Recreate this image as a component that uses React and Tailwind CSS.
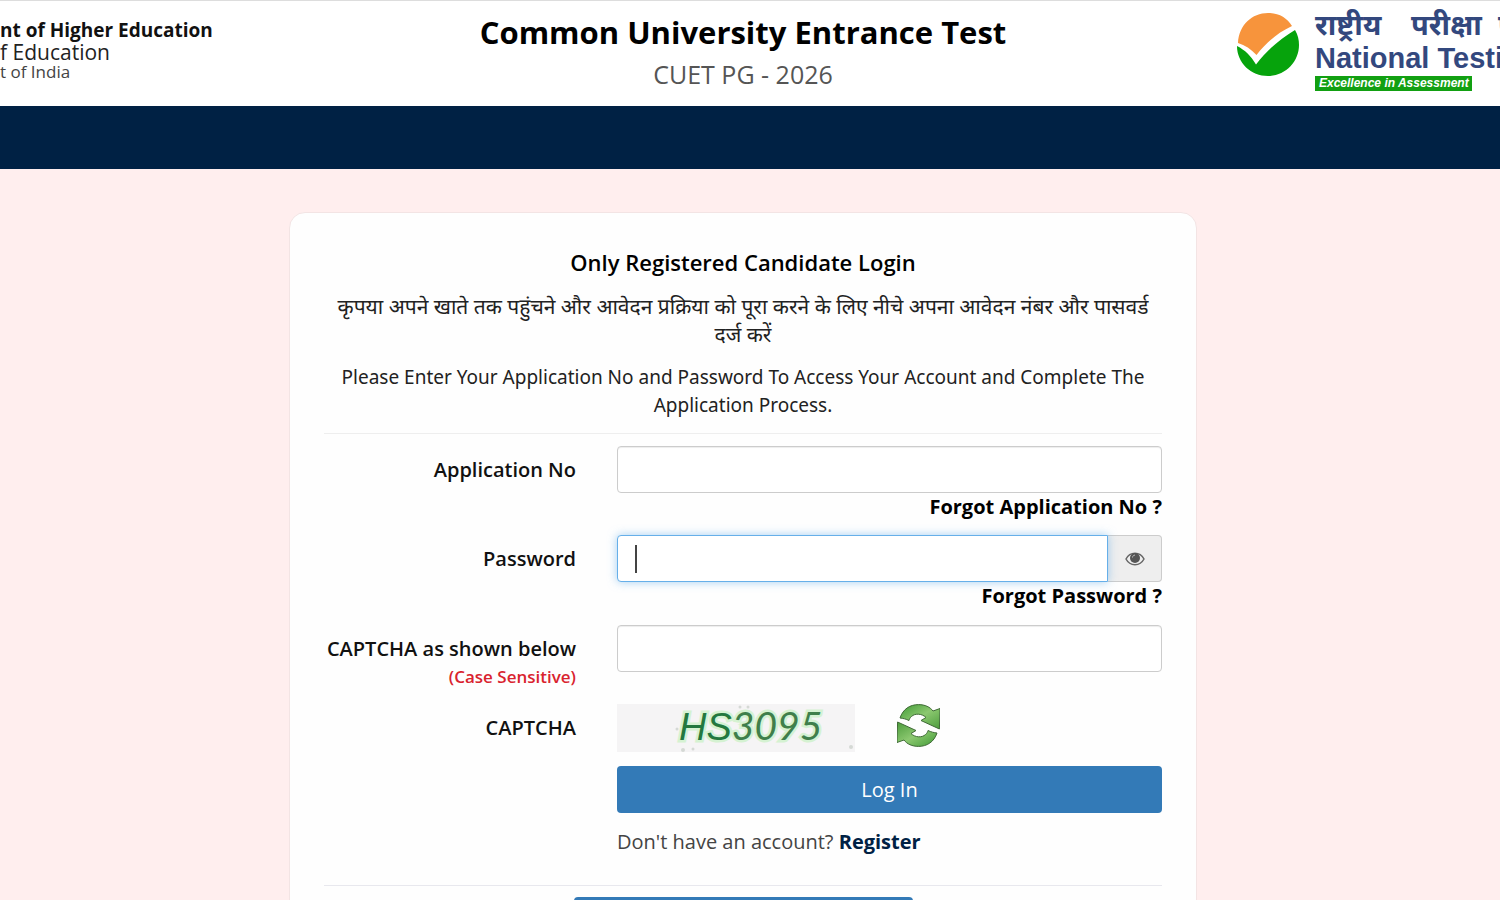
const BrandMark = () => (
  <svg viewBox="0 0 62 63" className="h-[63px] w-[62px] shrink-0" aria-hidden="true">
    <path d="M1 30C2 12 15 0 31 0C42 0 50 5 55 13C40 20 29 30 19.500 42C14 36 8 32 1 30Z" fill="#f7943c" />
    <path d="M0 33C8 37 14 43 19 51.500C29 38 43 26 58 17C61 22 62 27 62 32C62 49 48 63 31 63C14 63 0 50 0 33Z" fill="#06a30c" />
  </svg>
);

const EyeIcon = () => (
  <svg viewBox="0 0 20 14" className="h-[14px] w-5" aria-hidden="true">
    <path d="M1 7C5 -0.600 15 -0.600 19 7C15 14.600 5 14.600 1 7Z" fill="none" stroke="#666" strokeWidth="1.500" />
    <circle cx="10" cy="6" r="5" fill="#555" />
    <path d="M7.500 5.500C7.600 4 8.500 3.200 10 3.100" fill="none" stroke="#bbb" strokeWidth="1" />
  </svg>
);

const arrowPath = "M3 14C6 5 13 0.600 21.500 0.600C28 0.600 33 3 36 7L43 4.500L42.400 25L24 16.500L29 13.500C25 9.500 18 9 14.500 12.500C13 13.500 12.500 15 12 16.500C9 15 6 14.300 3 14Z";

const RefreshIcon = () => (
  <svg viewBox="0 0 43 43" className="h-[43px] w-[43px]" aria-hidden="true">
    <defs>
      <linearGradient id="leaf" x1="0" y1="0" x2="1" y2="1">
        <stop offset="0" stopColor="#3f9a35" />
        <stop offset="0.500" stopColor="#8cc870" />
        <stop offset="1" stopColor="#4c9c3c" />
      </linearGradient>
    </defs>
    <g stroke="#3f6a36" strokeWidth="1" strokeLinejoin="round" fill="url(#leaf)">
      <path d={arrowPath} />
      <path d={arrowPath} transform="rotate(180 21.500 21.500)" />
    </g>
  </svg>
);

const labelClass = "text-right text-[20px] font-semibold leading-7 text-[#111] pt-[10px]";
const fieldClass = "h-[47px] w-full rounded border border-[#ccc] bg-white px-4 text-[20px] shadow-[inset_0_1px_1px_rgba(0,0,0,0.075)] outline-none";

export default function App() {
  return (
    <div className="flex h-screen flex-col overflow-hidden bg-[#ffeeee] font-['Open_Sans','Noto_Sans',sans-serif]">
      <header className="grid h-[106px] shrink-0 grid-cols-[1fr_auto_1fr] border-t border-[#ddd] bg-white">
        <div className="min-w-0 overflow-hidden whitespace-nowrap pt-[17px] text-[#222]">
          <p className="text-[19px] font-bold leading-6 text-[#111]">nt of Higher Education</p>
          <p className="text-[21px] leading-5">f Education</p>
          <p className="text-[17px] leading-5 text-[#444]">t of India</p>
        </div>
        <div className="pr-[14px] pt-[7px] text-center">
          <h1 className="text-[31px] font-bold leading-12 text-black">Common University Entrance Test</h1>
          <p className="text-[25px] font-medium leading-9 text-[#555]">CUET PG - 2026</p>
        </div>
        <div className="flex min-w-0 justify-end overflow-hidden">
          <div className="flex w-[263px] shrink-0 gap-4 whitespace-nowrap">
            <div className="pt-3"><BrandMark /></div>
            <div className="pt-[7px]">
              <p className="flex gap-4 font-['Noto_Sans','Noto_Sans_Devanagari',sans-serif] text-[29px] font-bold leading-8 text-[#33487e]">
                <span className="w-20">राष्ट्रीय</span>
                <span className="w-[71px]">परीक्षा</span>
                <span>ए</span>
              </p>
              <p className="font-['Liberation_Sans',sans-serif] text-[29px] font-bold leading-9 text-[#33487e]">National Testi</p>
              <p className="w-[157px] bg-[#12a012] px-1 font-['Liberation_Sans',sans-serif] text-[12px] font-bold italic leading-[15px] text-white">Excellence in Assessment</p>
            </div>
          </div>
        </div>
      </header>
      <nav aria-label="Main" className="h-[63px] shrink-0 bg-[#002144]" />
      <main className="flex justify-center pr-[14px] pt-[43px]">
        <section className="w-full max-w-[908px] shrink-0 rounded-2xl border border-[#f3e4e4] bg-[#fefefe] px-[34px] pb-10 pt-[35px]">
          <div className="text-center text-[20px] leading-7 text-[#222]">
            <h2 className="text-[22px] font-semibold leading-7 text-black">Only Registered Candidate Login</h2>
            <p lang="hi" className="mt-4 text-[21px]">कृपया अपने खाते तक पहुंचने और आवेदन प्रक्रिया को पूरा करने के लिए नीचे अपना आवेदन नंबर और पासवर्ड दर्ज करें</p>
            <p className="mt-[15px] font-['Noto_Sans',sans-serif] text-[19px]">Please Enter Your Application No and Password To Access Your Account and Complete The Application Process.</p>
          </div>
          <form className="mt-[14px] border-t border-[#eee] pt-3" onSubmit={(e) => e.preventDefault()}>
            <div className="grid grid-cols-[252px_1fr] gap-x-[41px]">
              <label htmlFor="appno" className={labelClass}>Application No</label>
              <div className="h-[89px]">
                <input id="appno" type="text" className={fieldClass} />
                <a href="#forgot-application" className="block text-right text-[20px] font-bold leading-7 text-black">Forgot Application No ?</a>
              </div>
              <label htmlFor="password" className={labelClass}>Password</label>
              <div className="h-[90px]">
                <div className="relative flex">
                  <input id="password" type="password" className="z-10 h-[47px] min-w-0 flex-1 rounded-l border border-[#66afe9] bg-white px-4 text-[20px] shadow-[0_0_10px_rgba(102,175,233,0.6)] outline-none" />
                  <span aria-hidden="true" className="absolute left-[18px] top-[10px] z-20 h-7 w-0.5 bg-[#444]" />
                  <button type="button" aria-label="Show password" className="flex w-[54px] items-center justify-center rounded-r border border-l-0 border-[#ccc] bg-[#eee]"><EyeIcon /></button>
                </div>
                <a href="#forgot-password" className="block text-right text-[20px] font-bold leading-7 text-black">Forgot Password ?</a>
              </div>
              <label htmlFor="captcha" className={labelClass}>
                CAPTCHA as shown below
                <span className="block text-[17px] text-[#d9232e]">(Case Sensitive)</span>
              </label>
              <div className="h-[79px]">
                <input id="captcha" type="text" className={fieldClass} />
              </div>
              <p className={labelClass}>CAPTCHA</p>
              <div className="flex h-[62px] items-start gap-[42px]">
                <svg viewBox="0 0 238 48" className="h-12 w-[238px]" role="img" aria-label="HS3095">
                  <rect width="238" height="48" fill="#f5f4f5" />
                  <g fill="#d5d9d5">
                    <circle cx="60" cy="25" r="1.500" />
                    <circle cx="123" cy="3" r="1.500" />
                    <circle cx="131" cy="3" r="1.500" />
                    <circle cx="66" cy="46" r="2" />
                    <circle cx="76" cy="45" r="1.500" />
                    <circle cx="234" cy="43" r="2" />
                  </g>
                  <text x="62" y="36" fontFamily="Liberation Sans, sans-serif" fontStyle="italic" fontSize="38" fill="#23783f" stroke="#d5f2d2" strokeWidth="5" paintOrder="stroke">
                    HS<tspan fontFamily="Lato, sans-serif" fontSize="39" fill="#3f7f4b">3095</tspan>
                  </text>
                </svg>
                <button type="button" aria-label="Refresh captcha"><RefreshIcon /></button>
              </div>
              <div className="col-start-2">
                <button type="submit" className="block h-[47px] w-full rounded bg-[#337ab7] text-[20px] text-white">Log In</button>
                <p className="mt-[15px] text-[20px] leading-7 text-[#444]">Don't have an account? <a href="#register" className="font-bold text-[#002144]">Register</a></p>
              </div>
            </div>
          </form>
          <div className="mt-[29px] flex justify-center border-t border-[#e8e8ee] pt-[11px]">
            <button type="button" aria-label="More information" className="h-[47px] w-[339px] rounded bg-[#337ab7]" />
          </div>
        </section>
      </main>
    </div>
  );
}
